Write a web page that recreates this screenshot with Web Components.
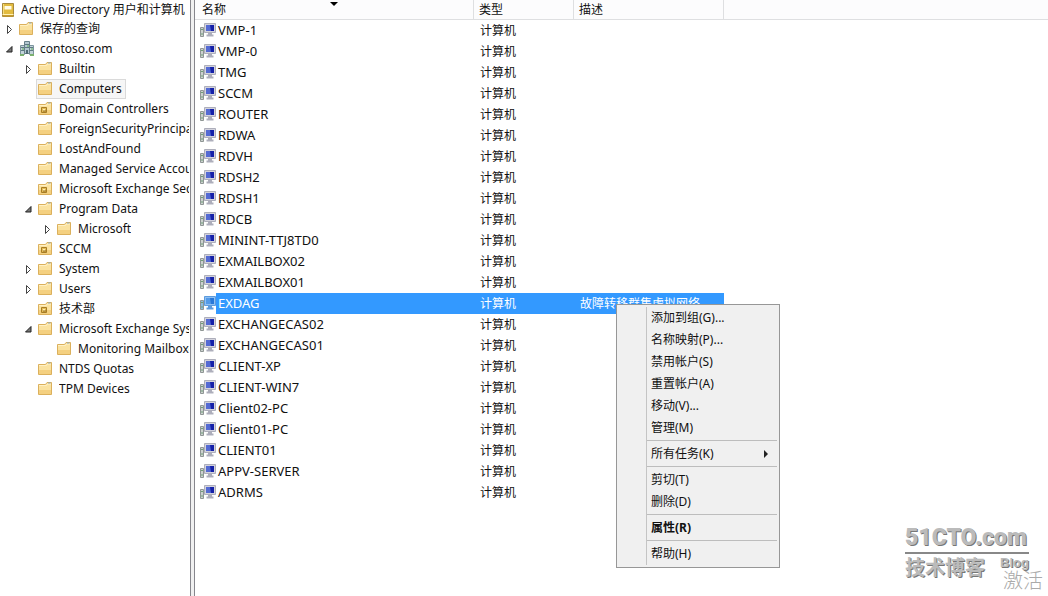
<!DOCTYPE html>
<html lang="zh-CN">
<head>
<meta charset="utf-8">
<title>Active Directory 用户和计算机</title>
<style>
    html, body {
        margin: 0;
        height: 100%;
        background: #fff;
    }

    body {
        font: 12px/20px "Noto Sans", "Noto Sans CJK SC", sans-serif;
        color: #111;
        overflow: hidden;
    }
</style>
</head>
<body>

<console-layout>
    <tree-node slot="tree" root icon="console" label="Active Directory 用户和计算机">
        <tree-node icon="folder" state="closed" label="保存的查询"></tree-node>
        <tree-node icon="domain" state="open" label="contoso.com">
            <tree-node icon="folder" state="closed" label="Builtin"></tree-node>
            <tree-node icon="folder" selected label="Computers"></tree-node>
            <tree-node icon="unit" label="Domain Controllers"></tree-node>
            <tree-node icon="folder" label="ForeignSecurityPrincipals"></tree-node>
            <tree-node icon="folder" label="LostAndFound"></tree-node>
            <tree-node icon="folder" label="Managed Service Accounts"></tree-node>
            <tree-node icon="unit" label="Microsoft Exchange Security Groups"></tree-node>
            <tree-node icon="folder" state="open" label="Program Data">
                <tree-node icon="folder" state="closed" label="Microsoft"></tree-node>
            </tree-node>
            <tree-node icon="unit" label="SCCM"></tree-node>
            <tree-node icon="folder" state="closed" label="System"></tree-node>
            <tree-node icon="folder" state="closed" label="Users"></tree-node>
            <tree-node icon="unit" label="技术部"></tree-node>
            <tree-node icon="folder" state="open" label="Microsoft Exchange System Objects">
                <tree-node icon="folder" label="Monitoring Mailboxes"></tree-node>
            </tree-node>
            <tree-node icon="folder" label="NTDS Quotas"></tree-node>
            <tree-node icon="folder" label="TPM Devices"></tree-node>
        </tree-node>
    </tree-node>

    <computer-list></computer-list>
</console-layout>

<context-menu>
    <menu-item>添加到组(G)...</menu-item>
    <menu-item>名称映射(P)...</menu-item>
    <menu-item>禁用帐户(S)</menu-item>
    <menu-item>重置帐户(A)</menu-item>
    <menu-item>移动(V)...</menu-item>
    <menu-item>管理(M)</menu-item>
    <menu-separator></menu-separator>
    <menu-item submenu>所有任务(K)</menu-item>
    <menu-separator></menu-separator>
    <menu-item>剪切(T)</menu-item>
    <menu-item>删除(D)</menu-item>
    <menu-separator></menu-separator>
    <menu-item default>属性(R)</menu-item>
    <menu-separator></menu-separator>
    <menu-item>帮助(H)</menu-item>
</context-menu>

<blog-mark>
    <span slot="site">51CTO.com</span>
    <span slot="title">技术博客</span>
    <span slot="sub">Blog</span>
    <span slot="notice">激活</span>
</blog-mark>

<script>
    const FOLDER = `
        <path d="M.500 3.500h7l1.500-2h4.500v12h-13z" fill="#fae2a0" stroke="#dbb05c"/>
        <path d="M1 9h12v4h-12z" fill="#f4d080"/>
        <path d="M1 4.500h7.500l1-1.500h3.500" fill="none" stroke="#fff1c4"/>
        <path d="M10 2h2.500" stroke="#86a9c4"/>`;

    const ICONS = {
        folder: FOLDER,
        unit: FOLDER + `
            <path d="M3.500 6.500h5v5h-5z" fill="#e4bd58" stroke="#a67c26"/>
            <path d="M5 8h2v2h-2z" fill="#ffefb5"/>
            <path d="M5 10h3" stroke="#8d6518"/>`,
        console: `
            <path d="M2.500 1.500h11v13h-11z" fill="#e2bb3f" stroke="#a88a3d"/>
            <path d="M2.500 12.500h11" stroke="#fff3b6"/>
            <path d="M3 13h10v1.500h-10z" fill="#c79a2d"/>
            <path d="M4.500 4h7v3.500h-7z" fill="#fffbe5"/>
            <path d="M3.500 2v10" stroke="#f5dc7a"/>`,
        domain: `
            <path d="M1.500 4.500h4v9h-4zM10.500 4.500h4v9h-4z" fill="#c3d3da" stroke="#7c949d"/>
            <path d="M5.500 .500h5v12h-5z" fill="#b4c8d1" stroke="#667f89"/>
            <path d="M6 3.500h4M6 6.500h4M2 6.500h3M2 9.500h3M11 6.500h3M11 9.500h3" stroke="#5d7984"/>
            <path d="M7 9h2v4h-2z" fill="#4f6a75"/>
            <path d="M8 5h2M3 8h2M12 8h2" stroke="#5fae57"/>
            <path d="M1 14h4M11 14h4" stroke="#7bb06f" stroke-width="2"/>`
    };

    const icon = (name) => `<svg width="16" height="16" viewBox="0 0 16 16" aria-hidden="true">${ICONS[name]}</svg>`;

    // два столбца: дерево и содержимое, между ними разделитель
    class ConsoleLayout extends HTMLElement {
        constructor() {
            super();
            this.attachShadow({mode: "open"});
            this.shadowRoot.innerHTML = `
                <style>
                    :host {
                        display: grid;
                        grid-template-columns: 190px 5px 1fr;
                        min-height: 100vh;
                    }

                    nav {
                        overflow: hidden;
                        margin-right: 1px;
                    }

                    .splitter {
                        box-sizing: border-box;
                        background: #f0f0f0;
                        border: solid #86868c;
                        border-width: 0 1px;
                    }

                    main {
                        min-width: 0;
                    }
                </style>
                <nav><slot name="tree"></slot></nav>
                <div class="splitter"></div>
                <main><slot></slot></main>
            `;
        }
    }

    class TreeNode extends HTMLElement {
        constructor() {
            super();
            this.attachShadow({mode: "open"});
        }

        connectedCallback() {
            this._render();
        }

        _render() {
            const state = this.getAttribute("state");
            const label = this.getAttribute("label");

            this.shadowRoot.innerHTML = `
                <style>
                    :host {
                        display: block;
                        white-space: nowrap;
                    }

                    .row {
                        display: flex;
                        height: 20px;
                    }

                    :host([root]) > .row {
                        height: 19px;
                    }

                    .toggle {
                        box-sizing: border-box;
                        flex: none;
                        width: 17px;
                        padding: 0 0 0 6px;
                        border: 0;
                        background: none;
                        display: flex;
                        align-items: center;
                    }

                    .item {
                        box-sizing: border-box;
                        min-width: 0;
                        display: flex;
                        align-items: center;
                        gap: 5px;
                        padding: 0 0 0 1px;
                        border: 1px solid transparent;
                        border-right: 0;
                        line-height: 18px;
                    }

                    :host([root]) > .row > .item {
                        padding-left: 0;
                        border-left: 0;
                    }

                    :host([selected]) .item {
                        padding-right: 3px;
                        background: #f6f6f6;
                        border: 1px solid #dadada;
                    }

                    .label {
                        min-width: 0;
                        overflow: hidden;
                    }

                    svg {
                        flex: none;
                        display: block;
                    }

                    .children {
                        padding-left: 19px;
                    }

                    :host([root]) > .children {
                        padding-left: 0;
                    }
                </style>
                <div class="row">
                    ${this.hasAttribute("root") ? "" : this._toggle(state, label)}
                    <span class="item">${icon(this.getAttribute("icon"))}<span class="label">${label}</span></span>
                </div>
                <div class="children"><slot></slot></div>
            `;
        }

        _toggle(state, label) {
            if (!state) {
                return `<span class="toggle"></span>`;
            }

            const shape = state === "open"
                ? `<path d="M6 2.500v5.500h-5.500z" fill="#777" stroke="#222"/>`
                : `<path d="M1.500 1.500v8l4-4z" fill="#fff" stroke="#444"/>`;

            return `
                <button class="toggle" aria-label="${label}" aria-expanded="${state === "open"}">
                    <svg width="7" height="11" viewBox="0 0 7 11">${shape}</svg>
                </button>`;
        }
    }

    class ComputerList extends HTMLElement {
        _names = [
            "VMP-1", "VMP-0", "TMG", "SCCM", "ROUTER", "RDWA", "RDVH", "RDSH2", "RDSH1", "RDCB",
            "MININT-TTJ8TD0", "EXMAILBOX02", "EXMAILBOX01", "EXDAG", "EXCHANGECAS02",
            "EXCHANGECAS01", "CLIENT-XP", "CLIENT-WIN7", "Client02-PC", "Client01-PC",
            "CLIENT01", "APPV-SERVER", "ADRMS"
        ];
        _selected = "EXDAG";
        _descriptions = {EXDAG: "故障转移群集虚拟网络"};

        constructor() {
            super();
            this.attachShadow({mode: "open"});
        }

        connectedCallback() {
            this._render();
        }

        _render() {
            this.shadowRoot.innerHTML = `
                <style>
                    :host {
                        display: block;
                    }

                    table {
                        width: 100%;
                        table-layout: fixed;
                        border-collapse: separate;
                        border-spacing: 0;
                    }

                    .name { width: 279px; }
                    .type { width: 100px; }
                    .desc { width: 150px; }

                    th {
                        box-sizing: border-box;
                        height: 20px;
                        padding: 0 0 0 5px;
                        font-weight: normal;
                        line-height: 19px;
                        text-align: left;
                        background: #fcfcfd;
                        border-right: 1px solid #dedfe1;
                        border-bottom: 1px solid #dedfe1;
                    }

                    th:first-child {
                        padding-left: 0;
                    }

                    th:last-child {
                        border-right: 0;
                    }

                    .sortable {
                        display: grid;
                        grid-template-columns: 1fr auto 1fr;
                    }

                    .sortable span {
                        padding-left: 7px;
                    }

                    .sortable svg {
                        margin-top: 2px;
                    }

                    td {
                        height: 21px;
                        padding: 0 0 0 6px;
                        line-height: 21px;
                        white-space: nowrap;
                    }

                    td:first-child {
                        padding-left: 5px;
                    }

                    .computer {
                        display: flex;
                        align-items: center;
                        font-size: 13px;
                    }

                    .computer span {
                        flex: 1;
                        padding-left: 2px;
                    }

                    .selected {
                        color: #fff;
                    }

                    .selected .computer span,
                    .selected td:nth-child(2),
                    .selected td:nth-child(3) {
                        background: #3399ff;
                    }
                </style>
                <table>
                    <colgroup><col class="name"><col class="type"><col class="desc"><col></colgroup>
                    <thead>
                        <tr>
                            <th>
                                <div class="sortable">
                                    <span>名称</span>
                                    <svg width="8" height="4" viewBox="0 0 8 4"><path d="M0 0h8L4 4z"/></svg>
                                </div>
                            </th>
                            <th>类型</th>
                            <th>描述</th>
                            <th></th>
                        </tr>
                    </thead>
                    <tbody>${this._names.map((name) => this._row(name)).join("")}</tbody>
                </table>
            `;
        }

        _row(name) {
            const selected = name === this._selected;

            return `
                <tr class="${selected ? "selected" : ""}">
                    <td><div class="computer">${this._computerIcon(selected)}<span>${name}</span></div></td>
                    <td>计算机</td>
                    <td>${this._descriptions[name] || ""}</td>
                    <td></td>
                </tr>`;
        }

        // выделенный компьютер рисуется голубым
        _computerIcon(selected) {
            const screen = selected ? "#2878d8" : "#1420a8";
            const shine = selected ? "#6fb0f4" : "#7f9cf0";
            const frame = selected ? "#8fc0f2" : "#d3d3dd";
            const stroke = selected ? "#5c9bdd" : "#adaebb";
            const box = selected ? "#8dbbe0" : "#ccd1cf";

            return `
                <svg width="16" height="16" viewBox="0 0 16 16" aria-hidden="true">
                    <path d="M.500 4.500h3v9h-3z" fill="${box}" stroke="#8f9695"/>
                    <path d="M1 6.500h2M1 11h2" stroke="#6f9f78"/>
                    <path d="M4.500 .500h11v9h-11z" fill="${frame}" stroke="${stroke}"/>
                    <path d="M6 2h8v6h-8z" fill="${screen}"/>
                    <path d="M6 2h4l1 6h-5z" fill="${shine}" opacity=".6"/>
                    <path d="M8 10h4v2h-4z" fill="${stroke}"/>
                    <path d="M6.500 12.500h7" stroke="${stroke}" stroke-width="2"/>
                </svg>`;
        }
    }

    class ContextMenu extends HTMLElement {
        constructor() {
            super();
            this.attachShadow({mode: "open"});
            this.shadowRoot.innerHTML = `
                <style>
                    :host {
                        position: absolute;
                        left: 616px;
                        top: 304px;
                        box-sizing: border-box;
                        width: 164px;
                        padding: 2px;
                        border: 1px solid #979797;
                        background: linear-gradient(#c4c4c4, #c4c4c4) 29px 2px / 1px calc(100% - 4px) no-repeat #f0f0f0;
                    }
                </style>
                <slot></slot>
            `;
        }

        connectedCallback() {
            this.setAttribute("role", "menu");
        }
    }

    class MenuItem extends HTMLElement {
        constructor() {
            super();
            this.attachShadow({mode: "open"});
        }

        connectedCallback() {
            const arrow = `<svg width="4" height="8" viewBox="0 0 4 8"><path d="M0 0v8l4-4z" fill="#222"/></svg>`;

            this.shadowRoot.innerHTML = `
                <style>
                    :host {
                        display: block;
                    }

                    button {
                        display: flex;
                        align-items: center;
                        justify-content: space-between;
                        width: 100%;
                        height: 22px;
                        padding: 0 9px 0 32px;
                        border: 0;
                        background: none;
                        font: inherit;
                        color: inherit;
                        white-space: nowrap;
                    }

                    :host([default]) button {
                        font-weight: bold;
                    }
                </style>
                <button role="menuitem"><slot></slot>${this.hasAttribute("submenu") ? arrow : ""}</button>
            `;
        }
    }

    class MenuSeparator extends HTMLElement {
        constructor() {
            super();
            this.attachShadow({mode: "open"});
            this.shadowRoot.innerHTML = `
                <style>
                    :host {
                        display: block;
                        padding: 1px 0 2px 28px;
                    }

                    hr {
                        margin: 0;
                        border: 0;
                        height: 1px;
                        background: #bdbdbd;
                    }
                </style>
                <hr>
            `;
        }
    }

    // водяной знак поверх окна
    class BlogMark extends HTMLElement {
        constructor() {
            super();
            this.attachShadow({mode: "open"});
            this.shadowRoot.innerHTML = `
                <style>
                    :host {
                        position: absolute;
                        right: 5px;
                        bottom: 2px;
                        width: 138px;
                        color: #bbb;
                        font-weight: bold;
                        text-shadow: 1px 1px #777;
                        pointer-events: none;
                    }

                    .site {
                        margin-right: 14px;
                        border-bottom: 2px solid #888;
                        font: 900 23px/28px Roboto, "Liberation Sans", sans-serif;
                        white-space: nowrap;
                    }

                    .line {
                        display: flex;
                        justify-content: space-between;
                        margin-right: 14px;
                    }

                    .title {
                        font-size: 20px;
                        line-height: 28px;
                    }

                    .sub {
                        font: bold 13px/18px "Liberation Sans", sans-serif;
                    }

                    .notice {
                        margin-top: -14px;
                        font-size: 20px;
                        font-weight: 300;
                        line-height: 26px;
                        text-align: right;
                        color: #aaa;
                        text-shadow: none;
                    }
                </style>
                <div class="site"><slot name="site"></slot></div>
                <div class="line">
                    <div class="title"><slot name="title"></slot></div>
                    <div class="sub"><slot name="sub"></slot></div>
                </div>
                <div class="notice"><slot name="notice"></slot></div>
            `;
        }
    }

    customElements.define("console-layout", ConsoleLayout);
    customElements.define("tree-node", TreeNode);
    customElements.define("computer-list", ComputerList);
    customElements.define("context-menu", ContextMenu);
    customElements.define("menu-item", MenuItem);
    customElements.define("menu-separator", MenuSeparator);
    customElements.define("blog-mark", BlogMark);
</script>
</body>
</html>
